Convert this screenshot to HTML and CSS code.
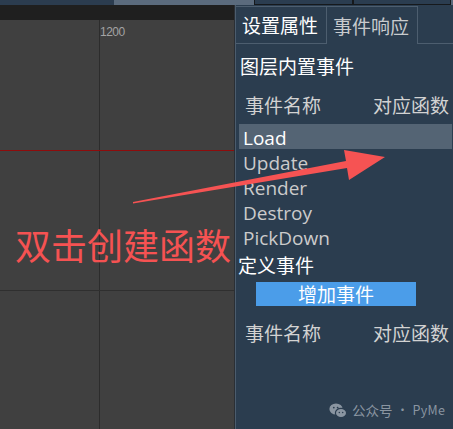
FILE: index.html
```html
<!DOCTYPE html>
<html lang="zh-CN">
<head>
<meta charset="utf-8">
<title>事件响应</title>
<link rel="stylesheet" href="styles.css">
</head>
<body>
<div class="app">
  <div class="topstrip">
    <div class="ts-a"></div>
    <div class="ts-b"></div>
    <div class="ts-box ts-box1"></div>
    <div class="ts-box ts-box2"></div>
    <div class="ts-end"></div>
  </div>
  <div class="main">
    <div class="canvas">
      <div class="canvas-bar"></div>
      <div class="canvas-area">
        <div class="vline"></div>
        <div class="ruler-label">1200</div>
        <div class="hline-red"></div>
        <div class="hline"></div>
      </div>
    </div>
    <div class="panel">
      <div class="tabs">
        <div class="tab tab-first">设置属性</div>
        <div class="tab tab-active">事件响应</div>
        <div class="tab-fill"></div>
      </div>
      <div class="panel-body">
        <div class="section-title">图层内置事件</div>
        <div class="table-head">
          <span class="col-name">事件名称</span>
          <span class="col-func">对应函数</span>
        </div>
        <ul class="event-list">
          <li class="event selected">Load</li>
          <li class="event">Update</li>
          <li class="event">Render</li>
          <li class="event">Destroy</li>
          <li class="event">PickDown</li>
        </ul>
        <div class="section-title section-custom">定义事件</div>
        <div class="btn-row"><button class="add-btn">增加事件</button></div>
        <div class="table-head table-head2">
          <span class="col-name">事件名称</span>
          <span class="col-func">对应函数</span>
        </div>
      </div>
    </div>
  </div>

  <div class="annot-text">双击创建函数</div>
  <svg class="annot-arrow" width="453" height="429" viewBox="0 0 453 429">
    <polygon points="133,202 346,161 344,150 385,157 349,180 347,168 133,203.5" fill="#f65353"/>
  </svg>

  <div class="watermark">
    <svg class="wm-icon" width="18" height="15" viewBox="0 0 18 15">
      <ellipse cx="7" cy="6" rx="6.6" ry="5.6" fill="#8a95a1"/>
      <ellipse cx="12" cy="10" rx="5.6" ry="4.6" fill="#8a95a1" stroke="#2b3d4f" stroke-width="1.2"/>
      <circle cx="4.8" cy="4.6" r="0.9" fill="#2b3d4f"/>
      <circle cx="8.6" cy="4.6" r="0.9" fill="#2b3d4f"/>
      <circle cx="10.3" cy="9.4" r="0.75" fill="#2b3d4f"/>
      <circle cx="13.7" cy="9.4" r="0.75" fill="#2b3d4f"/>
    </svg>
    <span class="wm-text">公众号</span>
    <span class="wm-dot">·</span>
    <span class="wm-text wm-latin">PyMe</span>
  </div>
</div>
</body>
</html>
```

FILE: styles.css
```css
* { box-sizing: border-box; }
html, body { margin: 0; padding: 0; }
body {
  width: 453px;
  height: 429px;
  overflow: hidden;
  background: #404040;
  font-family: "Noto Sans CJK SC", "Noto Sans", sans-serif;
}
.app {
  position: relative;
  width: 453px;
  height: 429px;
  display: flex;
  flex-direction: column;
}

/* top strip */
.topstrip {
  height: 5px;
  display: flex;
  flex: none;
}
.ts-a { width: 114px; background: #2b3c4f; }
.ts-b { width: 140px; background: #5b6b7d; }
.ts-box {
  background: #2b3d50;
  border: 1px solid #16191c;
  border-top: none;
}
.ts-box1 { width: 99px; }
.ts-box2 { width: 98px; }
.ts-end { flex: 1; background: #5b6b7d; }

.main {
  flex: 1;
  display: flex;
  min-height: 0;
}

/* canvas */
.canvas {
  width: 235px;
  display: flex;
  flex-direction: column;
  border-right: 1px solid #2a2f35;
}
.canvas-bar {
  height: 15px;
  background: #1f1f1f;
}
.canvas-area {
  flex: 1;
  position: relative;
  background: #404040;
}
.vline {
  position: absolute;
  left: 99px;
  top: 0;
  bottom: 0;
  width: 1px;
  background: #2c2c2c;
}
.ruler-label {
  position: absolute;
  left: 100px;
  top: 5px;
  font-family: "Liberation Sans", sans-serif;
  font-size: 12px;
  line-height: 14px;
  color: #a3a3a3;
  letter-spacing: -0.5px;
}
.hline-red {
  position: absolute;
  left: 0;
  right: 0;
  top: 130px;
  height: 1px;
  background: #8e0c0c;
}
.hline {
  position: absolute;
  left: 0;
  right: 0;
  top: 270px;
  height: 1px;
  background: #2f2f2f;
}

/* panel */
.panel {
  flex: 1;
  background: #2b3d4f;
  border-left: 1px solid #4b5c6d;
  display: flex;
  flex-direction: column;
}
.tabs {
  display: flex;
  margin-top: 1px;
  height: 38px;
}
.tab {
  font-size: 19px;
  line-height: 37px;
  padding-left: 6px;
  border-top: 1px solid #4d5e6f;
  border-right: 1px solid #4d5e6f;
  white-space: nowrap;
}
.tab-first {
  width: 91px;
  color: #ffffff;
  border-bottom: 1px solid #4d5e6f;
  line-height: 36px;
}
.tab-active {
  width: 91px;
  color: #c8cbce;
}
.tab-fill {
  flex: 1;
  border-bottom: 1px solid #4d5e6f;
}

.panel-body {
  display: flex;
  flex-direction: column;
}
.section-title {
  font-size: 19px;
  line-height: 26px;
  color: #ffffff;
  padding-left: 4px;
  margin-top: 9px;
}
.section-custom {
  padding-left: 2px;
  margin-top: 3px;
}
.table-head {
  display: flex;
  font-size: 19px;
  line-height: 26px;
  color: #d2d2d2;
  margin-top: 13px;
}
.col-name { margin-left: 9px; width: 128px; }
.table-head2 { margin-top: 14px; }

.event-list {
  list-style: none;
  margin: 6px 0 0 3px;
  padding: 0;
  width: 213px;
}
.event {
  height: 25px;
  padding-top: 4px;
  line-height: 21px;
  padding-left: 4px;
  font-family: "Open Sans", sans-serif;
  font-size: 19px;
  color: #cbcbcb;
}
.event.selected {
  background: #546474;
  color: #ffffff;
}

.btn-row {
  display: flex;
  margin-top: 4px;
  padding-left: 20px;
}
.add-btn {
  width: 160px;
  height: 24px;
  border: none;
  padding: 0;
  background: #4b9de9;
  color: #ffffff;
  font-family: "Noto Sans CJK SC", sans-serif;
  font-size: 19px;
  line-height: 24px;
}

/* annotations */
.annot-text {
  position: absolute;
  left: 15px;
  top: 224px;
  font-size: 36px;
  line-height: 40px;
  color: #f55252;
  white-space: nowrap;
}
.annot-arrow {
  position: absolute;
  left: 0;
  top: 0;
}

.watermark {
  position: absolute;
  left: 329px;
  top: 400px;
  display: flex;
  align-items: center;
  height: 20px;
  color: #8a95a1;
}
.wm-icon { display: block; margin-right: 5px; }
.wm-text {
  font-size: 13.5px;
  line-height: 20px;
  white-space: nowrap;
}
.wm-dot {
  font-size: 12px;
  line-height: 20px;
  margin: 0 4px;
}
.wm-latin {
  font-size: 12.5px;
  letter-spacing: 0.3px;
}
```
